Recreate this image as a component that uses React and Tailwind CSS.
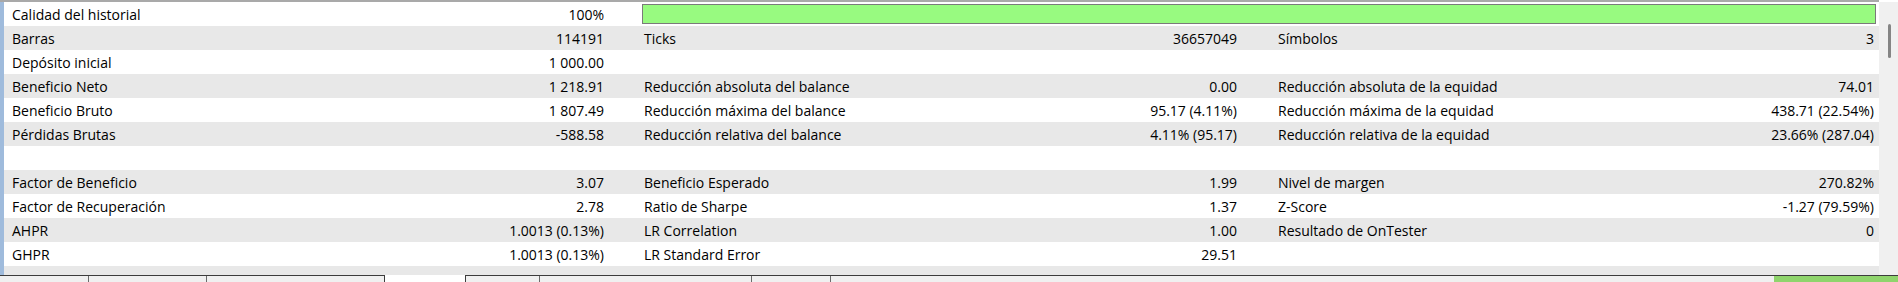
import React from 'react'

// filas del informe del probador
const rows = [
    [["Calidad del historial", "100%"], "bar", null],
    [["Barras", "114191"], ["Ticks", "36657049"], ["Símbolos", "3"]],
    [["Depósito inicial", "1 000.00"], null, null],
    [["Beneficio Neto", "1 218.91"], ["Reducción absoluta del balance", "0.00"], ["Reducción absoluta de la equidad", "74.01"]],
    [["Beneficio Bruto", "1 807.49"], ["Reducción máxima del balance", "95.17 (4.11%)"], ["Reducción máxima de la equidad", "438.71 (22.54%)"]],
    [["Pérdidas Brutas", "-588.58"], ["Reducción relativa del balance", "4.11% (95.17)"], ["Reducción relativa de la equidad", "23.66% (287.04)"]],
    [null, null, null],
    [["Factor de Beneficio", "3.07"], ["Beneficio Esperado", "1.99"], ["Nivel de margen", "270.82%"]],
    [["Factor de Recuperación", "2.78"], ["Ratio de Sharpe", "1.37"], ["Z-Score", "-1.27 (79.59%)"]],
    [["AHPR", "1.0013 (0.13%)"], ["LR Correlation", "1.00"], ["Resultado de OnTester", "0"]],
    [["GHPR", "1.0013 (0.13%)"], ["LR Standard Error", "29.51"], null],
]

const Cell = ({ item, className }) => (
    <div className={`flex items-center justify-between h-full ${className}`}>
        {item ? (
            <>
                <span>{item[0]}</span>
                <span>{item[1]}</span>
            </>
        ) : null}
    </div>
)

const Row = ({ row, index }) => {
    const bg = index % 2 === 1 ? 'bg-[#e8e8e8]' : 'bg-white'
    return (
        <div className={`flex h-[24px] ${bg}`}>
            <Cell item={row[0]} className="w-[620px] pl-[8px] pr-[20px]" />
            {row[1] === "bar" ? (
                <div className="flex items-center w-[1255px] pl-[18px] pr-[3px]">
                    <div className="w-full h-[20px] border border-[#7a7a7a] bg-[#98fa80]" />
                </div>
            ) : (
                <>
                    <Cell item={row[1]} className="w-[633px] pl-[20px] pr-[20px]" />
                    <Cell item={row[2]} className="w-[622px] pl-[21px] pr-[5px]" />
                </>
            )}
        </div>
    )
}

export default function App() {
    return (
        <div className="w-[1898px] h-[282px] overflow-hidden bg-white text-[14px] text-black" style={{ fontFamily: '"Open Sans", "Noto Sans", sans-serif' }}>
            <div className="h-[2px] bg-[#a9a9a9] w-[1879px]" />
            <div className="flex h-[273px]">
                <div className="w-[4px] bg-[#9fbbdc]" />
                <div className="flex flex-col w-[1875px]">
                    {rows.map((row, i) => (
                        <Row key={i} row={row} index={i} />
                    ))}
                    <div className="flex-1 bg-[#e8e8e8]" />
                </div>
                <div className="relative w-[19px] bg-[#f0f0f0]">
                    <div className="absolute left-[9px] top-[22px] w-[3px] h-[34px] rounded-full bg-[#858585]" />
                </div>
            </div>
            <div className="flex h-[7px] bg-white">
                <div className="flex w-[385px] border-t border-r border-[#3c3c3c] bg-[#f0f0f0]">
                    <div className="w-[89px] border-r border-[#6a6a6a]" />
                    <div className="w-[118px] border-r border-[#6a6a6a]" />
                </div>
                <div className="w-[80px] bg-white" />
                <div className="flex flex-1 border-t border-l border-[#3c3c3c] bg-[#f0f0f0]">
                    <div className="w-[74px] border-r border-[#6a6a6a]" />
                    <div className="w-[212px] border-r border-[#6a6a6a]" />
                    <div className="w-[79px] border-r border-[#6a6a6a]" />
                </div>
                <div className="w-[124px] border-t border-[#3c3c3c] bg-[#8fd46c]" />
            </div>
        </div>
    )
}
